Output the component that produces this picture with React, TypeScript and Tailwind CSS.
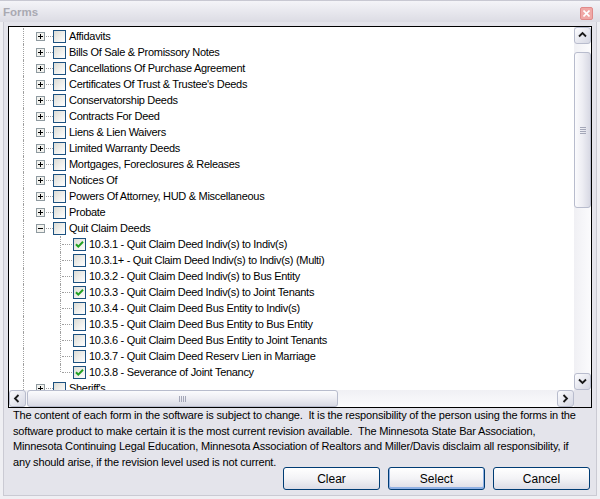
import React from 'react';

const topItems = [
  'Affidavits',
  'Bills Of Sale & Promissory Notes',
  'Cancellations Of Purchase Agreement',
  "Certificates Of Trust & Trustee's Deeds",
  'Conservatorship Deeds',
  'Contracts For Deed',
  'Liens & Lien Waivers',
  'Limited Warranty Deeds',
  'Mortgages, Foreclosures & Releases',
  'Notices Of',
  'Powers Of Attorney, HUD & Miscellaneous',
  'Probate',
];

const quitClaim = [
  { label: '10.3.1 - Quit Claim Deed Indiv(s) to Indiv(s)', checked: true },
  { label: '10.3.1+ - Quit Claim Deed Indiv(s) to Indiv(s) (Multi)', checked: false },
  { label: '10.3.2 - Quit Claim Deed Indiv(s) to Bus Entity', checked: false },
  { label: '10.3.3 - Quit Claim Deed Indiv(s) to Joint Tenants', checked: true },
  { label: '10.3.4 - Quit Claim Deed Bus Entity to Indiv(s)', checked: false },
  { label: '10.3.5 - Quit Claim Deed Bus Entity to Bus Entity', checked: false },
  { label: '10.3.6 - Quit Claim Deed Bus Entity to Joint Tenants', checked: false },
  { label: '10.3.7 - Quit Claim Deed Reserv Lien in Marriage', checked: false },
  { label: '10.3.8 - Severance of Joint Tenancy', checked: true },
];

const notice = [
  'The content of each form in the software is subject to change.  It is the responsibility of the person using the forms in the',
  'software product to make certain it is the most current revision available.  The Minnesota State Bar Association,',
  'Minnesota Continuing Legal Education, Minnesota Association of Realtors and Miller/Davis disclaim all responsibility, if',
  'any should arise, if the revision level used is not current.',
];

const Checkbox = ({ checked }: { checked?: boolean }) => (
  <div className="w-[13px] h-[13px] shrink-0 border border-[#1c5180] bg-gradient-to-br from-[#dcdcd5] to-white flex items-center justify-center">
    {checked && (
      <svg width="9" height="9" viewBox="0 0 9 9">
        <path d="M1 4.2 L3.3 6.6 L8 1.8" stroke="#21a121" strokeWidth="2" fill="none" />
      </svg>
    )}
  </div>
);

const Expander = ({ open }: { open?: boolean }) => (
  <svg width="9" height="9" viewBox="0 0 9 9" className="shrink-0">
    <rect x="0.5" y="0.5" width="8" height="8" fill="#f2f2ee" stroke="#8f9aa0" />
    <path d={open ? 'M2 4.5h5' : 'M2 4.5h5 M4.5 2v5'} stroke="#000" />
  </svg>
);

const RootLine = () => (
  <>
    <div className="w-[14px] shrink-0" />
    <div className="w-0 h-full shrink-0 border-l border-dotted border-[#a0a0a0]" />
  </>
);

const TopRow = ({ label, open }: { label: string; open?: boolean }) => (
  <div className="h-[16px] flex items-center">
    <RootLine />
    <div className="w-[12px] shrink-0" />
    <Expander open={open} />
    <div className="w-[7px] ml-[1px] shrink-0 border-t border-dotted border-[#a0a0a0]" />
    <Checkbox />
    <span className="ml-[3px] whitespace-nowrap">{label}</span>
  </div>
);

const ChildRow = ({ label, checked, last }: { label: string; checked?: boolean; last?: boolean }) => (
  <div className="h-[16px] flex items-center">
    <RootLine />
    <div className="w-[36px] shrink-0" />
    <div className={`w-0 shrink-0 border-l border-dotted border-[#a0a0a0] ${last ? 'h-[8px] self-start' : 'h-full'}`} />
    <div className="w-[10px] ml-[1px] shrink-0 border-t border-dotted border-[#a0a0a0]" />
    <div className="w-[1px] shrink-0" />
    <Checkbox checked={checked} />
    <span className="ml-[3px] whitespace-nowrap">{label}</span>
  </div>
);

const Chevron = ({ dir }: { dir: 'up' | 'down' | 'left' | 'right' }) => {
  const d = {
    up: 'M1 5.5 L4.5 2 L8 5.5',
    down: 'M1 2.5 L4.5 6 L8 2.5',
    left: 'M5.5 1 L2 4.5 L5.5 8',
    right: 'M2.5 1 L6 4.5 L2.5 8',
  }[dir];
  return (
    <svg width="9" height="9" viewBox="0 0 9 9">
      <path d={d} stroke="#1a1a1a" strokeWidth="1.8" fill="none" />
    </svg>
  );
};

const ScrollButton = ({ dir }: { dir: 'up' | 'down' | 'left' | 'right' }) => (
  <div className="w-[17px] h-[17px] shrink-0 rounded-[3px] border border-[#b8bccd] bg-gradient-to-br from-[#fcfcfe] to-[#d5d7e3] flex items-center justify-center">
    <Chevron dir={dir} />
  </div>
);

const VScroll = () => (
  <div className="w-[17px] h-full shrink-0 flex flex-col bg-gradient-to-r from-[#f0f0f4] to-[#fbfbfd]">
    <ScrollButton dir="up" />
    <div className="h-[8px] shrink-0" />
    <div className="h-[156px] shrink-0 rounded-[3px] border border-[#b8bccd] bg-gradient-to-r from-[#fbfbfd] via-[#ededf3] to-[#d8d9e4] flex flex-col items-center justify-center gap-[1px]">
      {[0, 1, 2, 3].map((i) => (
        <div key={i} className="w-[6px] h-[1px] bg-[#a4a7b8]" />
      ))}
    </div>
    <div className="flex-1" />
    <ScrollButton dir="down" />
  </div>
);

const HScroll = () => (
  <div className="flex-1 h-full flex bg-gradient-to-b from-[#f0f0f4] to-[#fbfbfd]">
    <ScrollButton dir="left" />
    <div className="w-[1px] shrink-0" />
    <div className="w-[311px] h-full shrink-0 rounded-[3px] border border-[#b8bccd] bg-gradient-to-b from-[#fbfbfd] via-[#ededf3] to-[#d8d9e4] flex items-center justify-center gap-[1px]">
      {[0, 1, 2, 3].map((i) => (
        <div key={i} className="w-[1px] h-[6px] bg-[#a4a7b8]" />
      ))}
    </div>
    <div className="flex-1" />
    <ScrollButton dir="right" />
  </div>
);

const Button = ({ label, primary }: { label: string; primary?: boolean }) => (
  <button
    className={`w-[97px] h-[23px] rounded-[3px] border border-[#003c74] bg-gradient-to-b from-white via-[#f3f3f6] to-[#dcdce6] text-[12px] text-black ${
      primary ? 'shadow-[inset_0_-1px_0_1px_#8fb0e4]' : ''
    }`}
  >
    {label}
  </button>
);

export default function App() {
  return (
    <div className="w-[600px] h-[499px] bg-[#e4e4eb] flex flex-col font-['Liberation_Sans',Arial,sans-serif] text-black overflow-hidden">
      {/* title bar */}
      <div className="h-[22px] shrink-0 flex items-center justify-between pl-[3px] pr-[7px] pt-[3px] bg-gradient-to-b from-[#f4f4f8] to-[#dcdce4] border-t border-[#c8c8d2]">
        <span className="text-[11.5px] font-bold text-[#a9a9b2]">Forms</span>
        <div className="w-[13px] h-[13px] rounded-[2px] border border-[#e08a8a] bg-[#f0a8a6] flex items-center justify-center">
          <svg width="7" height="7" viewBox="0 0 7 7">
            <path d="M0.5 0.5 L6.5 6.5 M6.5 0.5 L0.5 6.5" stroke="#fff" strokeWidth="1.6" />
          </svg>
        </div>
      </div>

      {/* window body with frame edges */}
      <div className="flex-1 flex flex-col border-x-[3px] border-b-[3px] border-[#efeff3]">
        <div className="flex-1 flex flex-col border-x border-b border-[#cacad3]">
          {/* tree frame */}
          <div className="mt-[4px] mx-[4px] h-[382px] shrink-0 border border-black bg-white flex flex-col">
            <div className="h-[363px] flex">
              <div className="flex-1 overflow-hidden pt-[1px] text-[11px] tracking-[-0.3px] leading-none">
                {topItems.map((t) => (
                  <TopRow key={t} label={t} />
                ))}
                <TopRow label="Quit Claim Deeds" open />
                {quitClaim.map((c, i) => (
                  <ChildRow key={c.label} label={c.label} checked={c.checked} last={i === quitClaim.length - 1} />
                ))}
                <TopRow label="Sheriff's" />
              </div>
              <VScroll />
            </div>
            <div className="h-[17px] flex">
              <HScroll />
              <div className="w-[17px] shrink-0 bg-[#e4e4eb]" />
            </div>
          </div>

          {/* notice */}
          <div className="h-[59px] shrink-0 px-[9px] text-[11px] leading-[15.6px] tracking-[-0.17px]">
            {notice.map((l) => (
              <div key={l} className="whitespace-pre">
                {l}
              </div>
            ))}
          </div>

          {/* buttons */}
          <div className="flex justify-end gap-[8px] pr-[6px]">
            <Button label="Clear" />
            <Button label="Select" primary />
            <Button label="Cancel" />
          </div>
        </div>
      </div>
    </div>
  );
}
